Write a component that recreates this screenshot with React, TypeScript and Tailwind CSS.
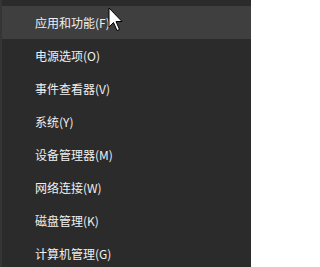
import React from "react";

const items = [
  "应用和功能(F)",
  "电源选项(O)",
  "事件查看器(V)",
  "系统(Y)",
  "设备管理器(M)",
  "网络连接(W)",
  "磁盘管理(K)",
  "计算机管理(G)",
];

export default function App() {
  return (
    <div
      className="relative w-[251px] h-[267px] overflow-hidden bg-[#2b2b2b] border-l-2 border-[#353535] pt-[6px]"
      style={{ fontFamily: '"Noto Sans CJK SC", "Noto Sans", sans-serif' }}
    >
      <div className="flex flex-col">
        {items.map((t, i) => (
          <div
            key={t}
            className={`h-[33px] flex items-center pl-[33px] text-[12px] leading-none text-[#f0f0f0] shrink-0 ${
              i === 0 ? "bg-[#3f3f3f]" : ""
            }`}
          >
            {t}
          </div>
        ))}
      </div>
      <svg
        className="absolute left-[106px] top-[7px]"
        width="16"
        height="25"
        viewBox="0 0 16 25"
      >
        <path
          d="M1 1 L1 20 L5.5 15.5 L9 23.5 L11.5 22.5 L8 14.5 L14 14.5 Z"
          fill="#ffffff"
          stroke="#000000"
          strokeWidth="1"
          strokeLinejoin="miter"
        />
      </svg>
    </div>
  );
}
